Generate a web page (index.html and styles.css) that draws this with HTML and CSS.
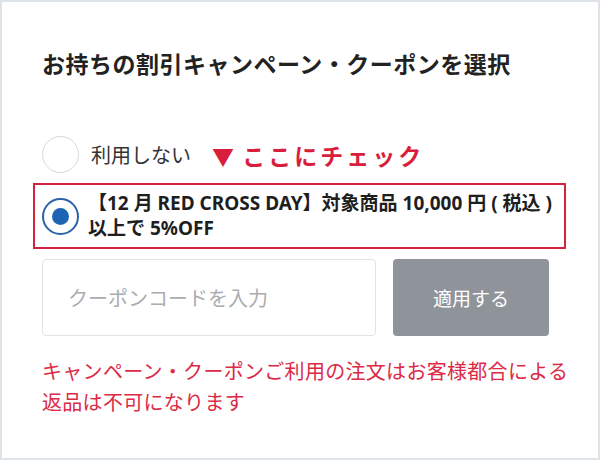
FILE: index.html
```html
<!DOCTYPE html>
<html lang="ja">
<head>
<meta charset="utf-8">
<link rel="stylesheet" href="styles.css">
</head>
<body>
<div class="panel">
  <h1 class="title">お持ちの割引キャンペーン・クーポンを選択</h1>
  <div class="option">
    <span class="radio"></span>
    <span class="option-label">利用しない</span>
    <span class="hint"><span class="tri">▼</span> ここにチェック</span>
  </div>
  <div class="option selected">
    <span class="radio checked"></span>
    <span class="coupon">【12 月 RED CROSS DAY】対象商品 10,000 円 ( 税込 )<br>以上で 5%OFF</span>
  </div>
  <div class="code-row">
    <div class="code-input">クーポンコードを入力</div>
    <div class="apply">適用する</div>
  </div>
  <p class="note">キャンペーン・クーポンご利用の注文はお客様都合による返品は不可になります</p>
</div>
</body>
</html>
```
FILE: styles.css
```css
html, body {
  margin: 0;
  padding: 0;
  background: #fff;
}
body {
  font-family: "Noto Sans CJK JP", "Noto Sans", sans-serif;
}
.panel {
  box-sizing: border-box;
  width: 600px;
  height: 460px;
  border: 2px solid #dde3e9;
  background: #fff;
  padding: 0 0 0 40px;
  display: flex;
  flex-direction: column;
  align-items: flex-start;
}
.title {
  margin: 45px 0 0 0;
  font-size: 23px;
  line-height: 32px;
  font-weight: 700;
  color: #222;
  letter-spacing: 0.5px;
}
.option {
  display: flex;
  align-items: center;
  margin-top: 57px;
  height: 37px;
}
.radio {
  box-sizing: border-box;
  width: 37px;
  height: 37px;
  border-radius: 50%;
  border: 1.5px solid #d4d8dd;
  flex: none;
  display: flex;
  align-items: center;
  justify-content: center;
}
.radio.checked {
  border: 2px solid #2b62a8;
}
.radio.checked::after {
  content: "";
  width: 17px;
  height: 17px;
  border-radius: 50%;
  background: #1f63b4;
}
.option-label {
  margin-left: 12px;
  font-size: 20px;
  color: #333;
}
.hint {
  margin-left: 21px;
  font-size: 23px;
  font-weight: 700;
  color: #d81e3c;
  letter-spacing: 3px;
}
.tri {
  font-size: 22px;
  letter-spacing: 0;
}
.option.selected {
  box-sizing: border-box;
  margin: 10px 0 0 -9px;
  width: 533px;
  height: 66px;
  border: 2px solid #d2233f;
  padding-left: 7px;
}
.coupon {
  margin-left: 9px;
  font-family: "Noto Sans", "Noto Sans CJK JP", sans-serif;
  font-size: 19px;
  line-height: 25px;
  font-weight: 700;
  color: #1e1e1e;
}
.code-row {
  display: flex;
  gap: 17px;
  margin-top: 10px;
}
.code-input {
  box-sizing: border-box;
  width: 334px;
  height: 77px;
  border: 1px solid #dfe3e8;
  border-radius: 4px;
  padding-left: 25px;
  display: flex;
  align-items: center;
  font-size: 20px;
  color: #a9adb2;
}
.apply {
  width: 156px;
  height: 77px;
  border-radius: 4px;
  background: #8f939a;
  color: #fff;
  font-size: 19px;
  display: flex;
  align-items: center;
  justify-content: center;
}
.note {
  margin: 19px 0 0 0;
  width: 540px;
  font-size: 20px;
  line-height: 31px;
  color: #dc2a46;
  letter-spacing: 0.3px;
}
```
